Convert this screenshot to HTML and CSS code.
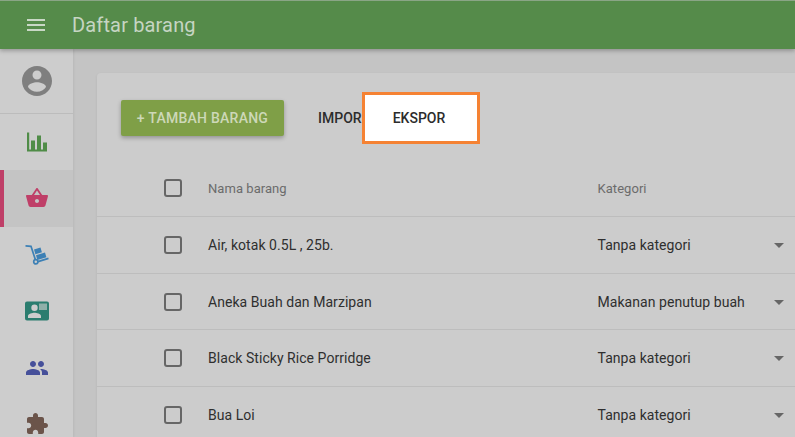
FILE: index.html
```html
<!DOCTYPE html>
<html lang="id">
<head>
<meta charset="utf-8">
<title>Daftar barang</title>
<link rel="stylesheet" href="styles.css">
</head>
<body>
<div class="app">
  <header class="topbar">
    <svg class="menu-icon" viewBox="0 0 24 24"><path d="M3 18h18v-2H3zm0-5h18v-2H3zm0-7v2h18V6z"/></svg>
    <h1 class="title">Daftar barang</h1>
  </header>
  <div class="body">
    <nav class="side">
      <div class="side-user">
        <svg class="ic ic-user" viewBox="0 0 24 24"><path d="M12 2C6.480 2 2 6.480 2 12s4.480 10 10 10 10-4.480 10-10S17.520 2 12 2zm0 3c1.660 0 3 1.340 3 3s-1.340 3-3 3-3-1.340-3-3 1.340-3 3-3zm0 14.200c-2.500 0-4.710-1.280-6-3.220.03-1.990 4-3.080 6-3.080s5.970 1.090 6 3.080c-1.290 1.940-3.500 3.220-6 3.220z"/></svg>
      </div>
      <div class="side-item first">
        <svg class="ic ic-green" viewBox="0 0 24 24"><path d="M2 2.500h2.200v17H6v-9h4v9h2V5.500h4v14h2v-7h4v9H2z"/></svg>
      </div>
      <div class="side-item active">
        <svg class="ic ic-pink" viewBox="0 0 24 24"><path d="M17.210 9l-4.380-6.560c-.19-.28-.51-.42-.83-.42-.32 0-.64.14-.83.43L6.790 9H2c-.55 0-1 .45-1 1 0 .09.010.18.040.27l2.540 9.270c.23.840 1 1.460 1.920 1.460h13c.92 0 1.690-.62 1.930-1.460l2.540-9.270L23 10c0-.55-.45-1-1-1h-4.790zM9 9l3-4.400L15 9H9zm3 8c-1.100 0-2-.9-2-2s.9-2 2-2 2 .9 2 2-.9 2-2 2z"/></svg>
      </div>
      <div class="side-item">
        <svg class="ic ic-blue" viewBox="0 0 24 24"><path class="line" d="M0.500 2.800 6 3.300 10.300 16.500M13 18.600l10.500-3.200"/><circle class="line" cx="10.800" cy="18.800" r="2.100"/><path d="M9 6.500l6.500-1.900 1.400 4.700-6.500 1.900zM11 12.200l9-2.600 1.400 4.600-9 2.700z"/></svg>
      </div>
      <div class="side-item">
        <svg class="ic ic-teal" viewBox="0 0 24 24"><path fill-rule="evenodd" d="M2 2.500h20a2 2 0 0 1 2 2v15a2 2 0 0 1-2 2H2a2 2 0 0 1-2-2v-15a2 2 0 0 1 2-2zm7.500 3a3.200 3.200 0 1 0 0 6.400 3.200 3.200 0 0 0 0-6.400zM3 19h13v-2c0-2-4.500-3.200-6.500-3.200S3 15 3 17z"/><path class="panel" d="M14 4.500h8V11h-8z"/></svg>
      </div>
      <div class="side-item">
        <svg class="ic ic-indigo" viewBox="0 0 24 24"><path d="M16 11c1.660 0 2.990-1.340 2.990-3S17.660 5 16 5c-1.660 0-3 1.340-3 3s1.340 3 3 3zm-8 0c1.660 0 2.990-1.340 2.990-3S9.660 5 8 5C6.340 5 5 6.340 5 8s1.340 3 3 3zm0 2c-2.330 0-7 1.170-7 3.500V19h14v-2.500c0-2.330-4.670-3.500-7-3.500zm8 0c-.29 0-.62.020-.97.050 1.160.84 1.970 1.970 1.970 3.450V19h6v-2.500c0-2.330-4.670-3.500-7-3.500z"/></svg>
      </div>
      <div class="side-item">
        <svg class="ic ic-brown" viewBox="0 0 24 24"><path d="M20.500 11H19V7c0-1.100-.9-2-2-2h-4V3.500C13 2.120 11.880 1 10.500 1S8 2.120 8 3.500V5H4c-1.100 0-1.990.9-1.990 2v3.800H3.500c1.490 0 2.700 1.210 2.700 2.700s-1.210 2.700-2.700 2.700H2V20c0 1.100.9 2 2 2h3.800v-1.500c0-1.490 1.210-2.700 2.700-2.700 1.490 0 2.700 1.210 2.700 2.700V22H17c1.100 0 2-.9 2-2v-4h1.500c1.380 0 2.500-1.120 2.500-2.500S21.880 11 20.500 11z"/></svg>
      </div>
    </nav>
    <main class="main">
      <section class="card">
        <div class="actions">
          <button class="btn-add">+ TAMBAH BARANG</button>
          <span class="btn-text">IMPOR</span>
        </div>
        <div class="row head">
          <span class="check"></span><span class="name">Nama barang</span><span class="cat">Kategori</span>
        </div>
        <div class="row">
          <span class="check"></span><span class="name">Air, kotak 0.5L , 25b.</span><span class="cat">Tanpa kategori</span><span class="arrow"></span>
        </div>
        <div class="row">
          <span class="check"></span><span class="name">Aneka Buah dan Marzipan</span><span class="cat">Makanan penutup buah</span><span class="arrow"></span>
        </div>
        <div class="row">
          <span class="check"></span><span class="name">Black Sticky Rice Porridge</span><span class="cat">Tanpa kategori</span><span class="arrow"></span>
        </div>
        <div class="row">
          <span class="check"></span><span class="name">Bua Loi</span><span class="cat">Tanpa kategori</span><span class="arrow"></span>
        </div>
      </section>
    </main>
  </div>
  <div class="spotlight">EKSPOR</div>
</div>
</body>
</html>
```
FILE: styles.css
```css
html, body {
  margin: 0;
  padding: 0;
  width: 795px;
  height: 437px;
  overflow: hidden;
  background: #c4c4c4;
  font-family: Roboto, "Liberation Sans", sans-serif;
}
.app {
  position: relative;
  width: 795px;
  height: 437px;
  overflow: hidden;
}
.topbar {
  box-sizing: border-box;
  height: 49px;
  border-top: 1px solid #8aa586;
  background: #558b4a;
  display: flex;
  align-items: center;
  padding-left: 24px;
  box-shadow: 0 2px 4px rgba(0, 0, 0, 0.25);
  position: relative;
  z-index: 2;
}
.menu-icon {
  width: 24px;
  height: 24px;
  fill: #c9d8c6;
}
.title {
  margin: 0 0 0 24px;
  font-size: 20px;
  font-weight: 400;
  letter-spacing: 0.15px;
  color: #c6d5c3;
}
.body {
  display: flex;
  height: 388px;
}
.side {
  width: 73px;
  flex: none;
  background: #cdcdcd;
  box-shadow: 1px 0 2px rgba(0, 0, 0, 0.06);
}
.side-user {
  height: 65px;
  border-bottom: 1px solid #bcbcbc;
  display: flex;
  align-items: center;
  justify-content: center;
  box-sizing: border-box;
}
.side-item {
  height: 56.5px;
  display: flex;
  align-items: center;
  justify-content: center;
  box-sizing: border-box;
}
.side-item.first {
  height: 56px;
}
.side-item.active {
  background: #c4c4c4;
  border-left: 4px solid #bf3f68;
  padding-right: 4px;
}
.ic { width: 24px; height: 24px; }
.ic-user { width: 36px; height: 36px; fill: #7f7f7f; }
.ic-green { fill: #4f8c47; }
.ic-pink { fill: #bf3f68; }
.ic-blue { fill: #3d80b5; }
.ic-blue .line {
  fill: none;
  stroke: #3d80b5;
  stroke-width: 1.7;
}
.ic-teal { fill: #2b7d6f; }
.ic-teal .panel { fill: #8fb0a9; }
.ic-indigo { fill: #46509a; }
.ic-brown { fill: #6b544a; }
.main {
  flex: 1;
  padding: 24px 0 0 24px;
  min-width: 0;
}
.card {
  background: #cccccc;
  border-radius: 4px 0 0 0;
  box-shadow: 0 1px 3px rgba(0, 0, 0, 0.08);
  height: 400px;
}
.actions {
  height: 87px;
  box-sizing: border-box;
  padding: 27px 0 0 24px;
  display: flex;
  align-items: flex-start;
}
.btn-add {
  height: 36px;
  width: 163px;
  border: 0;
  padding: 0;
  border-radius: 2px;
  background: #7f9f47;
  color: #cdd8b8;
  font: 500 14px Roboto, sans-serif;
  letter-spacing: 0.25px;
  box-shadow: 0 2px 4px rgba(0, 0, 0, 0.28);
}
.btn-text {
  margin-left: 34px;
  line-height: 36px;
  font-size: 14px;
  font-weight: 500;
  color: #2c2c2c;
}
.row {
  height: 56.7px;
  display: flex;
  align-items: center;
  box-sizing: border-box;
  border-top: 1px solid #bdbdbd;
  font-size: 14px;
  letter-spacing: 0.05px;
  color: #2f2f2f;
  position: relative;
}
.row.head {
  height: 56px;
  border-top: 0;
  font-size: 13px;
  font-weight: 400;
  color: #6b6b6b;
}
.check {
  box-sizing: border-box;
  width: 18px;
  height: 18px;
  margin-left: 67px;
  border: 2px solid #666;
  border-radius: 3px;
  flex: none;
}
.name {
  margin-left: 26px;
  width: 389.5px;
  flex: none;
}
.arrow {
  position: absolute;
  left: 677px;
  top: 26px;
  width: 0;
  height: 0;
  border-left: 5px solid transparent;
  border-right: 5px solid transparent;
  border-top: 5px solid #666;
}
.spotlight {
  position: absolute;
  left: 362px;
  top: 92px;
  width: 118px;
  height: 52px;
  box-sizing: border-box;
  border: 3px solid #f58233;
  background: #fff;
  display: flex;
  align-items: center;
  justify-content: center;
  font-size: 14px;
  font-weight: 500;
  color: #2c2c2c;
  padding-right: 4px;
  z-index: 5;
}
```
